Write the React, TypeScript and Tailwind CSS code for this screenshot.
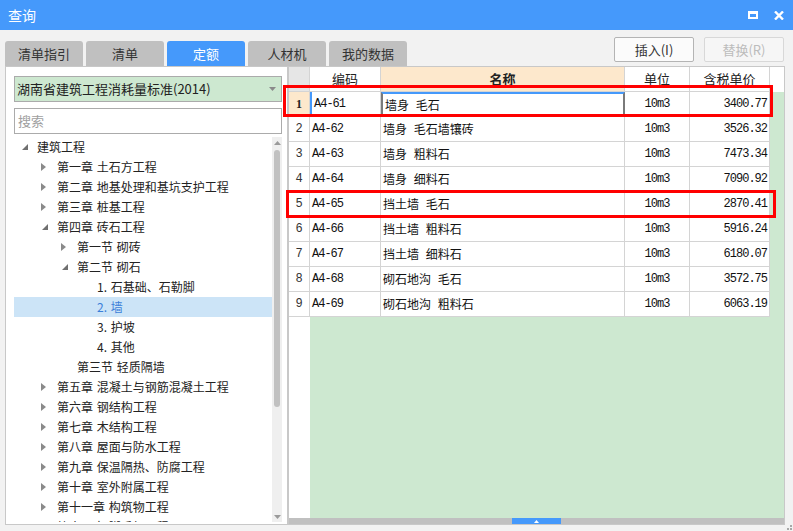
import React from "react";

type Node = {
  label: string;
  depth: number;
  icon: "open" | "closed" | "none";
  selected?: boolean;
};

const tree: Node[] = [
  { label: "建筑工程", depth: 0, icon: "open" },
  { label: "第一章 土石方工程", depth: 1, icon: "closed" },
  { label: "第二章 地基处理和基坑支护工程", depth: 1, icon: "closed" },
  { label: "第三章 桩基工程", depth: 1, icon: "closed" },
  { label: "第四章 砖石工程", depth: 1, icon: "open" },
  { label: "第一节 砌砖", depth: 2, icon: "closed" },
  { label: "第二节 砌石", depth: 2, icon: "open" },
  { label: "1. 石基础、石勒脚", depth: 3, icon: "none" },
  { label: "2. 墙", depth: 3, icon: "none", selected: true },
  { label: "3. 护坡", depth: 3, icon: "none" },
  { label: "4. 其他", depth: 3, icon: "none" },
  { label: "第三节 轻质隔墙", depth: 2, icon: "none" },
  { label: "第五章 混凝土与钢筋混凝土工程", depth: 1, icon: "closed" },
  { label: "第六章 钢结构工程", depth: 1, icon: "closed" },
  { label: "第七章 木结构工程", depth: 1, icon: "closed" },
  { label: "第八章 屋面与防水工程", depth: 1, icon: "closed" },
  { label: "第九章 保温隔热、防腐工程", depth: 1, icon: "closed" },
  { label: "第十章 室外附属工程", depth: 1, icon: "closed" },
  { label: "第十一章 构筑物工程", depth: 1, icon: "closed" },
  { label: "第十二章 脚手架工程", depth: 1, icon: "closed" },
];

const rows = [
  { code: "A4-61", name: "墙身 毛石", unit: "10m3", price: "3400.77" },
  { code: "A4-62", name: "墙身 毛石墙镶砖", unit: "10m3", price: "3526.32" },
  { code: "A4-63", name: "墙身 粗料石", unit: "10m3", price: "7473.34" },
  { code: "A4-64", name: "墙身 细料石", unit: "10m3", price: "7090.92" },
  { code: "A4-65", name: "挡土墙 毛石", unit: "10m3", price: "2870.41" },
  { code: "A4-66", name: "挡土墙 粗料石", unit: "10m3", price: "5916.24" },
  { code: "A4-67", name: "挡土墙 细料石", unit: "10m3", price: "6180.07" },
  { code: "A4-68", name: "砌石地沟 毛石", unit: "10m3", price: "3572.75" },
  { code: "A4-69", name: "砌石地沟 粗料石", unit: "10m3", price: "6063.19" },
];

const tabs = ["清单指引", "清单", "定额", "人材机", "我的数据"];

const indent = ["pl-[8px]", "pl-[28px]", "pl-[48px]", "pl-[68px]"];

function TreeRow({ node }: { node: Node }) {
  return (
    <div
      className={`flex items-center h-[20px] shrink-0 ${indent[node.depth]} ${
        node.selected ? "bg-[#cce4f7] text-[#3b7fd9]" : "text-[#222]"
      }`}
    >
      <span className="w-[15px] flex items-center">
        {node.icon === "open" && (
          <svg width="6" height="6" viewBox="0 0 6 6">
            <path d="M6 0 L6 6 L0 6 Z" fill="#707070" />
          </svg>
        )}
        {node.icon === "closed" && (
          <svg width="5" height="8" viewBox="0 0 5 8" className="ml-[-1px]">
            <path d="M0 0 L5 4 L0 8 Z" fill="#8a8a8a" />
          </svg>
        )}
      </span>
      <span className="whitespace-nowrap text-[12px] [word-spacing:1px]">{node.label}</span>
    </div>
  );
}

export default function App() {
  return (
    <div className="relative w-[793px] h-[531px] bg-[#f2f2f2] flex flex-col overflow-hidden font-['Noto_Sans_CJK_SC',sans-serif]">
      {/* title bar */}
      <div className="h-[30px] bg-[#4599fb] flex items-center justify-between pl-[8px] pr-[9px] shrink-0">
        <span className="text-white text-[14px]">查询</span>
        <div className="flex items-center gap-[16px]">
          <div className="w-[10px] h-[8px] border-2 border-t-[3px] border-white" />
          <svg width="10" height="9" viewBox="0 0 10 9">
            <path d="M1 0.5 L9 8.5 M9 0.5 L1 8.5" stroke="white" strokeWidth="2.4" />
          </svg>
        </div>
      </div>

      <div className="flex flex-col flex-1 pl-[5px] pr-[8px]">
        {/* tabs + buttons */}
        <div className="h-[36px] flex items-end justify-between shrink-0">
          <div className="flex gap-[3px]">
            {tabs.map((t) => (
              <div
                key={t}
                className={`w-[78px] h-[25px] rounded-t-[3px] flex items-center justify-center text-[13px] ${
                  t === "定额" ? "bg-[#4599fb] text-white" : "bg-[#c0c0c0] text-[#333]"
                }`}
              >
                {t}
              </div>
            ))}
          </div>
          <div className="flex gap-[10px] self-start mt-[7px] mr-[1px]">
            <div className="w-[80px] h-[25px] border border-[#b4b4b4] rounded-[2px] bg-[#fbfbfb] flex items-center justify-center text-[13px] text-[#333]">
              插入(I)
            </div>
            <div className="w-[80px] h-[25px] border border-[#d8d8d8] rounded-[2px] bg-[#f6f6f6] flex items-center justify-center text-[13px] text-[#bcbcbc]">
              替换(R)
            </div>
          </div>
        </div>

        {/* panels */}
        <div className="flex h-[459px]">
          {/* left panel */}
          <div className="w-[283px] bg-white border border-[#c8c8c8] flex flex-col pl-[8px] pr-[5px] pt-[9px] pb-[2px]">
            <div className="h-[26px] bg-[#cde8d0] border border-[#ababab] flex items-center justify-between pl-[2px] pr-[5px] text-[13px] text-[#222] shrink-0">
              <span>湖南省建筑工程消耗量标准(2014)</span>
              <svg width="7" height="4" viewBox="0 0 7 4">
                <path d="M0 0 L7 0 L3.5 4 Z" fill="#8a8a8a" />
              </svg>
            </div>
            <div className="h-[26px] mt-[6px] border border-[#ababab] flex items-center pl-[3px] text-[13px] text-[#a0a0a0] shrink-0">
              搜索
            </div>
            <div className="flex flex-1 mt-[3px] min-h-0">
              <div className="flex-1 flex flex-col overflow-hidden">
                {tree.map((n) => (
                  <TreeRow key={n.label} node={n} />
                ))}
              </div>
              <div className="w-[10px] bg-[#efefef] flex flex-col items-center">
                <svg width="7" height="4" viewBox="0 0 7 4" className="mt-[4px]">
                  <path d="M0 4 L7 4 L3.5 0 Z" fill="#9a9a9a" />
                </svg>
                <div className="w-[6px] h-[257px] mt-[5px] rounded-[3px] bg-[#c1c1c1]" />
                <div className="flex-1" />
                <svg width="7" height="4" viewBox="0 0 7 4" className="mb-[3px]">
                  <path d="M0 0 L7 0 L3.5 4 Z" fill="#9a9a9a" />
                </svg>
              </div>
            </div>
          </div>

          {/* right panel */}
          <div className="w-[497px] border border-[#c8c8c8] flex flex-col bg-white">
            {/* header */}
            <div className="flex h-[25px] shrink-0 text-[13px] text-[#222]">
              <div className="w-[21px] bg-[#e6e6e6] border-r border-b border-[#d4d4d4]" />
              <div className="w-[71px] border-r border-b border-[#d4d4d4] flex items-center justify-center">编码</div>
              <div className="w-[244px] bg-[#fde8cc] border-r border-b border-[#d4d4d4] flex items-center justify-center font-bold">名称</div>
              <div className="w-[65px] border-r border-b border-[#d4d4d4] flex items-center justify-center">单位</div>
              <div className="w-[80px] border-r border-b border-[#d4d4d4] flex items-center justify-center">含税单价</div>
              <div className="flex-1" />
            </div>

            {/* body */}
            <div className="flex-1 flex flex-col bg-[#cde8d0] min-h-0">
              {rows.map((r, i) => (
                <div key={r.code} className="flex h-[25px] shrink-0">
                  <div
                    className={`w-[21px] border-r border-b border-[#d4d4d4] flex items-center justify-center text-[12px] font-['Liberation_Mono',monospace] ${
                      i === 0 ? "bg-[#fde8cc] font-bold font-['Liberation_Serif',serif] text-[#222]" : "bg-white text-[#333]"
                    }`}
                  >
                    {i + 1}
                  </div>
                  <div
                    className={`w-[71px] bg-white border-r border-b border-[#d4d4d4] flex items-center pl-[2px] text-[12px] tracking-[-1px] font-['Liberation_Mono',monospace] text-[#111] ${
                      i === 0 ? "border-l-2 border-l-[#4599fb] pl-0" : ""
                    }`}
                  >
                    {r.code}
                  </div>
                  <div
                    className={`w-[244px] bg-white border-r border-b border-[#d4d4d4] flex items-center pl-[2px] text-[12px] text-[#111] [word-spacing:4px] ${
                      i === 0 ? "border-t-2 border-t-[#4599fb] border-l-2 border-l-[#7a7a7a] border-r-2 border-r-[#7a7a7a] pl-0" : ""
                    }`}
                  >
                    {r.name}
                  </div>
                  <div className="w-[65px] bg-white border-r border-b border-[#d4d4d4] flex items-center justify-center text-[12px] tracking-[-1px] font-['Liberation_Mono',monospace] text-[#111]">
                    {r.unit}
                  </div>
                  <div className="w-[80px] bg-white border-r border-b border-[#d4d4d4] flex items-center justify-end pr-[2px] text-[12px] tracking-[-1px] font-['Liberation_Mono',monospace] text-[#111]">
                    {r.price}
                  </div>
                </div>
              ))}
              <div className="flex-1 flex">
                <div className="w-[21px] bg-white" />
              </div>
            </div>

            {/* bottom scrollbar */}
            <div className="h-[6px] bg-[#c0c0c0] flex justify-center shrink-0">
              <div className="w-[49px] h-[6px] bg-[#4599fb] flex items-center justify-center">
                <svg width="5" height="3" viewBox="0 0 5 3">
                  <path d="M0 3 L5 3 L2.5 0 Z" fill="white" />
                </svg>
              </div>
            </div>
          </div>
        </div>
      </div>

      {/* resize grip */}
      <div className="absolute right-[1px] bottom-[1px] grid grid-cols-2 gap-[1px]">
        <div className="w-[2px] h-[2px]" />
        <div className="w-[2px] h-[2px] bg-[#a8a8a8]" />
        <div className="w-[2px] h-[2px] bg-[#a8a8a8]" />
        <div className="w-[2px] h-[2px] bg-[#a8a8a8]" />
      </div>

      {/* red highlight boxes */}
      <div className="absolute left-[283px] top-[85px] w-[490px] h-[32px] border-[3px] border-[#ff0000]" />
      <div className="absolute left-[286px] top-[190px] w-[490px] h-[28px] border-[3px] border-[#ff0000]" />
    </div>
  );
}
